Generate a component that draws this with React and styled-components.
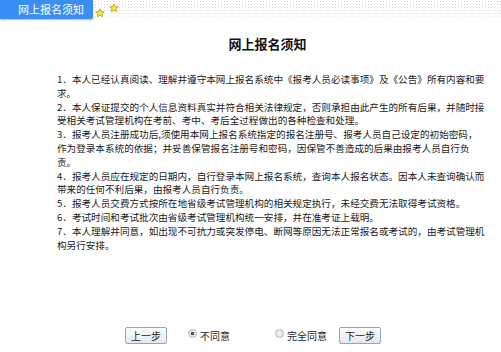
import React from "react";
import styled, { createGlobalStyle } from "styled-components";

const Global = createGlobalStyle`
  html, body { margin: 0; padding: 0; background: #fff; }
  body { font-family: "Noto Sans CJK SC", "Liberation Sans", sans-serif; width: 501px; height: 352px; overflow: hidden; }
`;

const Page = styled.div`
  width: 501px;
  height: 352px;
  display: flex;
  flex-direction: column;
`;

const TopBar = styled.div`
  display: flex;
  align-items: flex-start;
  height: 20px;
  background-image: radial-gradient(circle, #d6d6d6 0.7px, transparent 0.9px);
  background-size: 3px 3px;
  background-position: 94px 0;
  position: relative;
  &::after {
    content: "";
    position: absolute;
    left: 94px;
    right: 0;
    bottom: 0;
    height: 8px;
    background: linear-gradient(rgba(255,255,255,0), #fff);
  }
`;

const Tab = styled.div`
  width: 93px;
  height: 19px;
  background: #3a8df3;
  color: #fff;
  font-size: 11px;
  line-height: 19px;
  padding-left: 18px;
  box-sizing: border-box;
  box-shadow: 0 1px 2px rgba(0,0,0,0.25);
  border-radius: 0 0 2px 0;
  z-index: 1;
`;

const Stars = styled.div`
  display: flex;
  align-items: flex-start;
  gap: 4px;
  margin-left: 2px;
  z-index: 1;
`;

const StarIcon = styled.svg`
  width: 10px;
  height: 10px;
  margin-top: ${(p) => p.$top}px;
`;

const Star = ({ top }) => (
  <StarIcon $top={top} viewBox="0 0 20 20">
    <polygon
      points="10,1.5 12.6,7 18.5,7.6 14,11.6 15.3,17.6 10,14.5 4.7,17.6 6,11.6 1.5,7.6 7.4,7"
      fill="#f5e33a"
      stroke="#b8a020"
      strokeWidth="1.6"
      strokeLinejoin="round"
    />
  </StarIcon>
);

const Title = styled.h1`
  margin: 16px 0 0 0;
  padding-left: 34px;
  text-align: center;
  font-size: 13px;
  font-weight: bold;
  line-height: 16px;
  color: #111;
`;

const Notice = styled.div`
  margin: 21px 0 0 57px;
  width: 420px;
  font-size: 9.6px;
  line-height: 13.8px;
  color: #1a1a1a;
`;

const Item = styled.p`
  margin: 0;
`;

const Line = styled.span`
  display: block;
  white-space: nowrap;
`;

const Actions = styled.div`
  margin-top: auto;
  margin-bottom: 8px;
  display: flex;
  align-items: center;
  padding-left: 125px;
  height: 17px;
`;

const Btn = styled.button`
  font-family: inherit;
  font-size: 10px;
  color: #222;
  width: 42px;
  height: 17px;
  padding: 0;
  border: 1px solid #9aa4b4;
  border-radius: 2px;
  background: linear-gradient(#fbfcfe, #e3e8f0);
  margin-left: ${(p) => p.$ml || 0}px;
  line-height: 15px;
`;

const RadioLabel = styled.label`
  display: flex;
  align-items: center;
  font-size: 10px;
  color: #222;
  margin-left: ${(p) => p.$ml}px;
`;

const RadioDot = styled.span`
  width: 7px;
  height: 7px;
  border-radius: 50%;
  border: 1px solid #b8b8b8;
  background: radial-gradient(circle, ${(p) => (p.$on ? "#555 0 1.6px, #e8e8e8 2px" : "#f4f4f4 0, #dcdcdc 100%")});
  margin-right: 3px;
  margin-top: -4px;
`;

const items = [
  [
    "1．本人已经认真阅读、理解并遵守本网上报名系统中《报考人员必读事项》及《公告》所有内容和要",
    "求。",
  ],
  [
    "2．本人保证提交的个人信息资料真实并符合相关法律规定，否则承担由此产生的所有后果，并随时接",
    "受相关考试管理机构在考前、考中、考后全过程做出的各种检查和处理。",
  ],
  [
    "3．报考人员注册成功后,须使用本网上报名系统指定的报名注册号、报考人员自己设定的初始密码，",
    "作为登录本系统的依据；并妥善保管报名注册号和密码，因保管不善造成的后果由报考人员自行负",
    "责。",
  ],
  [
    "4．报考人员应在规定的日期内，自行登录本网上报名系统，查询本人报名状态。因本人未查询确认而",
    "带来的任何不利后果，由报考人员自行负责。",
  ],
  ["5．报考人员交费方式按所在地省级考试管理机构的相关规定执行，未经交费无法取得考试资格。"],
  ["6．考试时间和考试批次由省级考试管理机构统一安排，并在准考证上载明。"],
  [
    "7．本人理解并同意，如出现不可抗力或突发停电、断网等原因无法正常报名或考试的，由考试管理机",
    "构另行安排。",
  ],
];

export default function App() {
  return (
    <>
      <Global />
      <Page>
        <TopBar>
          <Tab>网上报名须知</Tab>
          <Stars>
            <Star top={8} />
            <Star top={3} />
          </Stars>
        </TopBar>
        <Title>网上报名须知</Title>
        <Notice>
          {items.map((lines, i) => (
            <Item key={i}>
              {lines.map((t, j) => (
                <Line key={j}>{t}</Line>
              ))}
            </Item>
          ))}
        </Notice>
        <Actions>
          <Btn>上一步</Btn>
          <RadioLabel $ml={21}>
            <RadioDot $on />
            不同意
          </RadioLabel>
          <RadioLabel $ml={45}>
            <RadioDot />
            完全同意
          </RadioLabel>
          <Btn $ml={12}>下一步</Btn>
        </Actions>
      </Page>
    </>
  );
}
